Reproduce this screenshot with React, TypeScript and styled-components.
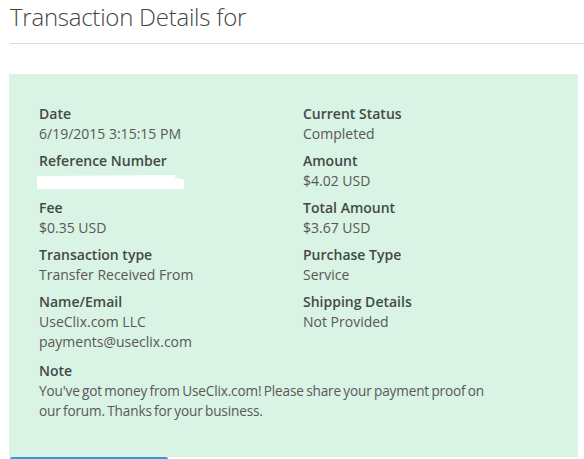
import React from "react";
import styled, { createGlobalStyle } from "styled-components";

const Global = createGlobalStyle`
  html, body { margin: 0; padding: 0; background: #ffffff; }
  body { font-family: "Open Sans", "DejaVu Sans", sans-serif; overflow: hidden; }
`;

const Page = styled.div`
  width: 584px;
  height: 459px;
  overflow: hidden;
  padding-left: 10px;
  box-sizing: border-box;
`;

const Title = styled.h1`
  margin: 0;
  font-size: 24px;
  line-height: 34px;
  font-weight: 300;
  color: #454545;
  letter-spacing: -0.25px;
`;

const Rule = styled.hr`
  margin: 9px 0 0 0;
  border: 0;
  border-top: 1px solid #dddddd;
  height: 0;
`;

const Panel = styled.section`
  margin: 30px 0 0 -1px;
  width: 569px;
  height: 383px;
  box-sizing: border-box;
  background: #d9f3e4;
  padding: 30px 30px 0 30px;
`;

const Columns = styled.div`
  display: grid;
  grid-template-columns: 264px 1fr;
`;

const Stack = styled.div`
  display: flex;
  flex-direction: column;
  gap: 7px;
`;

const Field = styled.div`
  display: flex;
  flex-direction: column;
  font-size: 14px;
  line-height: 20px;
`;

const Label = styled.div`
  color: #434a46;
  font-weight: 550;
`;

const Value = styled.div`
  color: #585858;
  font-weight: 400;
`;

const NoteField = styled(Field)`
  margin-top: 9px;
  max-width: 462px;
`;

const NoteText = styled(Value)`
  font-size: 13.6px;
  letter-spacing: -0.15px;
  word-spacing: -1px;
`;

const Redacted = styled.span`
  display: block;
  width: 147px;
  height: 14px;
  margin: 4px 0 2px -2px;
  background: #ffffff;
  clip-path: polygon(0 8%, 94% 0, 94% 20%, 100% 30%, 100% 100%, 0 100%);
`;

const ButtonEdge = styled.div`
  width: 158px;
  height: 2px;
  background: #3a95e4;
  border-radius: 3px 3px 0 0;
`;

type Item = { label: string; values: React.ReactNode[] };

const left: Item[] = [
  { label: "Date", values: ["6/19/2015 3:15:15 PM"] },
  { label: "Reference Number", values: [<Redacted key="r" />] },
  { label: "Fee", values: ["$0.35 USD"] },
  { label: "Transaction type", values: ["Transfer Received From"] },
  { label: "Name/Email", values: ["UseClix.com LLC", "payments@useclix.com"] },
];

const right: Item[] = [
  { label: "Current Status", values: ["Completed"] },
  { label: "Amount", values: ["$4.02 USD"] },
  { label: "Total Amount", values: ["$3.67 USD"] },
  { label: "Purchase Type", values: ["Service"] },
  { label: "Shipping Details", values: ["Not Provided"] },
];

const renderItems = (items: Item[]) =>
  items.map((it) => (
    <Field key={it.label}>
      <Label>{it.label}</Label>
      {it.values.map((v, i) => (
        <Value key={i}>{v}</Value>
      ))}
    </Field>
  ));

export default function App() {
  return (
    <>
      <Global />
      <Page>
        <Title>Transaction Details for</Title>
        <Rule />
        <Panel>
          <Columns>
            <Stack>{renderItems(left)}</Stack>
            <Stack>{renderItems(right)}</Stack>
          </Columns>
          <NoteField>
            <Label>Note</Label>
            <NoteText>
              You've got money from UseClix.com! Please share your payment proof on our forum. Thanks for your business.
            </NoteText>
          </NoteField>
        </Panel>
        <ButtonEdge />
      </Page>
    </>
  );
}
